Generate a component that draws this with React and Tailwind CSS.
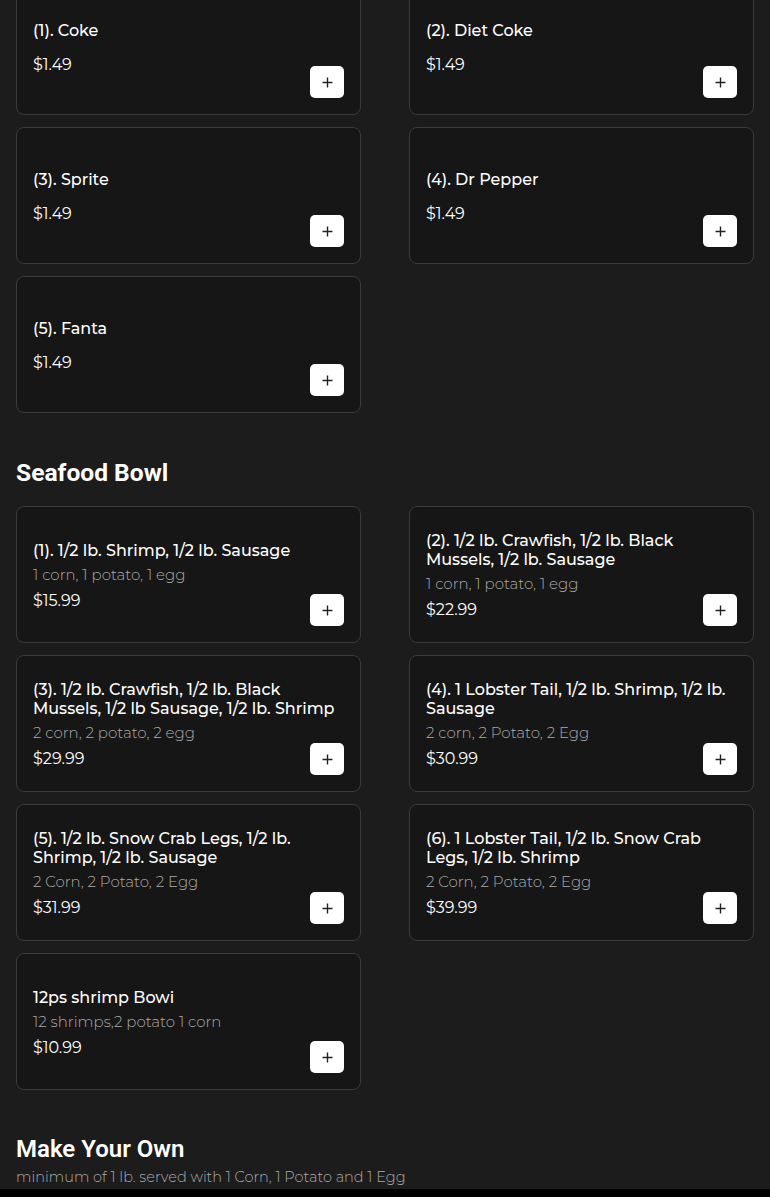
const drinks = [
  { name: "(1). Coke", price: "$1.49" },
  { name: "(2). Diet Coke", price: "$1.49" },
  { name: "(3). Sprite", price: "$1.49" },
  { name: "(4). Dr Pepper", price: "$1.49" },
  { name: "(5). Fanta", price: "$1.49" },
];

const bowls = [
  { name: "(1). 1/2 lb. Shrimp, 1/2 lb. Sausage", desc: "1 corn, 1 potato, 1 egg", price: "$15.99" },
  { name: "(2). 1/2 lb. Crawfish, 1/2 lb. Black Mussels, 1/2 lb. Sausage", desc: "1 corn, 1 potato, 1 egg", price: "$22.99" },
  { name: "(3). 1/2 lb. Crawfish, 1/2 lb. Black Mussels, 1/2 lb Sausage, 1/2 lb. Shrimp", desc: "2 corn, 2 potato, 2 egg", price: "$29.99" },
  { name: "(4). 1 Lobster Tail, 1/2 lb. Shrimp, 1/2 lb. Sausage", desc: "2 corn, 2 Potato, 2 Egg", price: "$30.99" },
  { name: "(5). 1/2 lb. Snow Crab Legs, 1/2 lb. Shrimp, 1/2 lb. Sausage", desc: "2 Corn, 2 Potato, 2 Egg", price: "$31.99" },
  { name: "(6). 1 Lobster Tail, 1/2 lb. Snow Crab Legs, 1/2 lb. Shrimp", desc: "2 Corn, 2 Potato, 2 Egg", price: "$39.99" },
  { name: "12ps shrimp Bowi", desc: "12 shrimps,2 potato 1 corn", price: "$10.99" },
];

function PlusIcon() {
  return (
    <svg width="11" height="11" viewBox="0 0 11 11" fill="none">
      <path d="M5.5 0.5v10M0.5 5.5h10" stroke="#222" strokeWidth="1.4" />
    </svg>
  );
}

function ItemCard({ item }) {
  return (
    <div className="relative h-[137px] rounded-lg border border-[#3b3b3b] bg-[#161616] px-4 pt-[18px] pb-[14px] flex flex-col justify-center">
      <h3 className="text-white text-[16px] leading-[19px] font-medium pr-1">{item.name}</h3>
      {item.desc ? (
        <p className="mt-[5px] mb-1 text-[15px] leading-5 font-light text-[#ababab]">{item.desc}</p>
      ) : (
        <div className="h-[13px]" />
      )}
      <p className="text-white text-[16px] leading-6 font-normal">{item.price}</p>
      {/* add to cart */}
      <button className="absolute right-4 bottom-4 w-[34px] h-[32px] rounded-[5px] bg-white flex items-center justify-center">
        <PlusIcon />
      </button>
    </div>
  );
}

export default function App() {
  return (
    <div className="min-h-[1197px] bg-[#1c1c1c] font-['Montserrat','Open_Sans',sans-serif] overflow-hidden">
      <div className="px-4 -mt-[22px]">
        <div className="grid grid-cols-2 gap-x-12 gap-y-3">
          {drinks.map((d) => (
            <ItemCard key={d.name} item={d} />
          ))}
        </div>

        <h2 className="mt-[44px] mb-[17px] text-white text-[24.6px] leading-8 font-bold font-['Roboto',sans-serif]">
          Seafood Bowl
        </h2>
        <div className="grid grid-cols-2 gap-x-12 gap-y-3">
          {bowls.map((b) => (
            <ItemCard key={b.name} item={b} />
          ))}
        </div>

        <h2 className="mt-[43px] mb-[2px] text-white text-[24px] leading-8 font-semibold font-['Roboto',sans-serif]">
          Make Your Own
        </h2>
        <p className="text-[14.5px] leading-5 font-light text-[#ababab]">
          minimum of 1 lb. served with 1 Corn, 1 Potato and 1 Egg
        </p>
      </div>
      <div className="mt-[2px] h-10 bg-black" />
    </div>
  );
}
